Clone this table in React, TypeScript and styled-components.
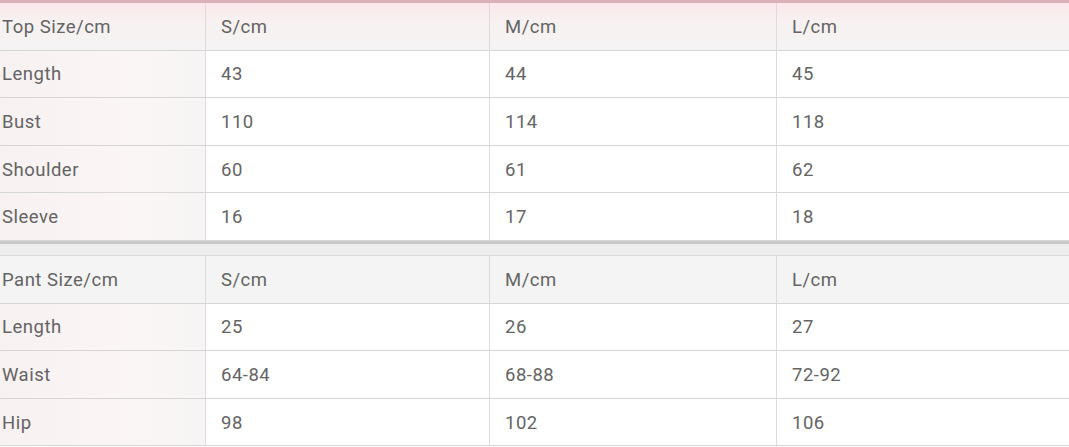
import React from "react";
import styled, { createGlobalStyle } from "styled-components";

const Global = createGlobalStyle`
  html, body { margin: 0; padding: 0; background: #ffffff; }
  body { font-family: Roboto, "Liberation Sans", Arial, sans-serif; }
`;

const Page = styled.div`
  width: 1069px;
  height: 447px;
  overflow: hidden;
  background: #ffffff;
  border-top: 3px solid #d9b2b9;
  box-sizing: border-box;
`;

const Table = styled.div`
  display: grid;
  grid-template-columns: 205px 284px 287px 1fr;
  grid-auto-rows: 47.6px;
`;

const Cell = styled.div<{ $head?: boolean; $first?: boolean; $pink?: boolean }>`
  box-sizing: border-box;
  display: flex;
  align-items: center;
  padding-left: ${(p) => (p.$first ? "2px" : "15px")};
  padding-top: 1px;
  border-bottom: 1px solid #d6d6d6;
  border-left: ${(p) => (p.$first ? "none" : "1px solid #dcdcdc")};
  font-size: 18.5px;
  letter-spacing: 0.5px;
  color: #646464;
  background: ${(p) =>
    p.$head
      ? p.$pink
        ? "linear-gradient(180deg, #fbe8eb 0%, #f7f1f1 40%, #f4f3f3 100%)"
        : "#f4f4f4"
      : p.$first
      ? "linear-gradient(90deg, #f8f1f1 0%, #fbf6f6 70%, #f6f4f4 100%)"
      : "#ffffff"};
`;

const Separator = styled.div`
  height: 15px;
  box-sizing: border-box;
  border-top: 3px solid #c9c9c9;
  border-bottom: 1px solid #dadada;
  background: #ededed;
`;

type Section = { head: string[]; rows: string[][]; pink?: boolean };

const top: Section = {
  head: ["Top Size/cm", "S/cm", "M/cm", "L/cm"],
  rows: [
    ["Length", "43", "44", "45"],
    ["Bust", "110", "114", "118"],
    ["Shoulder", "60", "61", "62"],
    ["Sleeve", "16", "17", "18"],
  ],
  pink: true,
};

const pant: Section = {
  head: ["Pant Size/cm", "S/cm", "M/cm", "L/cm"],
  rows: [
    ["Length", "25", "26", "27"],
    ["Waist", "64-84", "68-88", "72-92"],
    ["Hip", "98", "102", "106"],
  ],
};

const SizeTable = ({ s }: { s: Section }) => (
  <Table>
    {s.head.map((h, i) => (
      <Cell key={"h" + i} $head $first={i === 0} $pink={s.pink}>
        {h}
      </Cell>
    ))}
    {s.rows.map((r, ri) =>
      r.map((c, ci) => (
        <Cell key={ri + "-" + ci} $first={ci === 0}>
          {c}
        </Cell>
      ))
    )}
  </Table>
);

export default function App() {
  return (
    <>
      <Global />
      <Page>
        <SizeTable s={top} />
        <Separator />
        <SizeTable s={pant} />
      </Page>
    </>
  );
}
